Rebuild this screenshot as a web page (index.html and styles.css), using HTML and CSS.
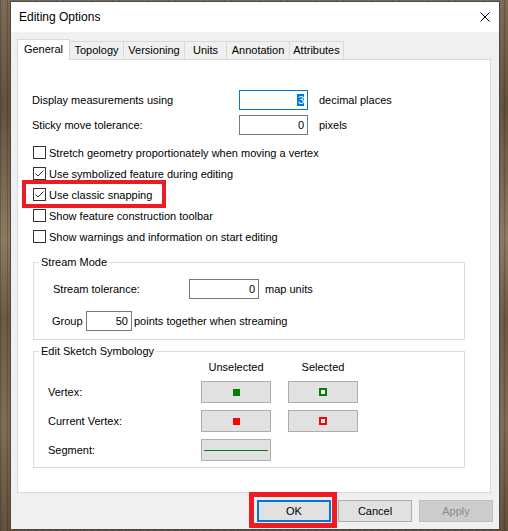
FILE: index.html
```html
<!DOCTYPE html>
<html>
<head>
<meta charset="utf-8">
<title>Editing Options</title>
<link rel="stylesheet" href="styles.css">
</head>
<body>
<div class="dialog">
  <div class="titlebar">
    <span class="title">Editing Options</span>
    <svg class="close" width="10" height="10" viewBox="0 0 10 10"><path d="M0.5 0.5 L9.5 9.5 M9.5 0.5 L0.5 9.5" stroke="#000" stroke-width="1" fill="none"/></svg>
  </div>
  <div class="client">
    <div class="tabs">
      <div class="tab active t-general">General</div>
      <div class="tab t-topology">Topology</div>
      <div class="tab t-versioning">Versioning</div>
      <div class="tab t-units">Units</div>
      <div class="tab t-annotation">Annotation</div>
      <div class="tab t-attributes">Attributes</div>
    </div>
    <div class="panel">
      <div class="row">
        <span class="label">Display measurements using</span>
        <span class="textbox focus"><span class="sel">3</span></span>
        <span class="unit">decimal places</span>
      </div>
      <div class="row">
        <span class="label">Sticky move tolerance:</span>
        <span class="textbox">0</span>
        <span class="unit">pixels</span>
      </div>
      <div class="checks">
        <div class="check"><span class="box"></span>Stretch geometry proportionately when moving a vertex</div>
        <div class="check"><span class="box"><svg width="11" height="11" viewBox="0 0 11 11"><path d="M1.5 5.5 L4 8 L9.5 2.5" stroke="#333" stroke-width="1" fill="none"/></svg></span>Use symbolized feature during editing</div>
        <div class="check"><span class="box"><svg width="11" height="11" viewBox="0 0 11 11"><path d="M1.5 5.5 L4 8 L9.5 2.5" stroke="#333" stroke-width="1" fill="none"/></svg></span>Use classic snapping</div>
        <div class="check"><span class="box"></span>Show feature construction toolbar</div>
        <div class="check"><span class="box"></span>Show warnings and information on start editing</div>
      </div>
      <div class="annot annot-snap"></div>

      <fieldset class="group stream">
        <legend>Stream Mode</legend>
        <div class="group-body">
          <div class="srow">
            <span class="slabel">Stream tolerance:</span>
            <span class="textbox tb-stream">0</span>
            <span class="sunit">map units</span>
          </div>
          <div class="srow srow-group">
            <span class="glabel">Group</span>
            <span class="textbox tb-group">50</span>
            <span class="gunit">points together when streaming</span>
          </div>
        </div>
      </fieldset>

      <fieldset class="group sketch">
        <legend>Edit Sketch Symbology</legend>
        <div class="sym-grid">
          <span></span>
          <span class="colhead">Unselected</span>
          <span class="colhead">Selected</span>

          <span class="symlabel">Vertex:</span>
          <span class="symbtn"><span class="sq sq-green"></span></span>
          <span class="symbtn"><span class="sq sq-green-open"></span></span>

          <span class="symlabel">Current Vertex:</span>
          <span class="symbtn"><span class="sq sq-red"></span></span>
          <span class="symbtn"><span class="sq sq-red-open"></span></span>

          <span class="symlabel">Segment:</span>
          <span class="symbtn"><span class="seg"></span></span>
          <span></span>
        </div>
      </fieldset>
    </div>
    <div class="buttons">
      <span class="btn-wrap">
        <span class="btn default">OK</span>
        <span class="annot annot-ok"></span>
      </span>
      <span class="btn">Cancel</span>
      <span class="btn disabled">Apply</span>
    </div>
  </div>
</div>
</body>
</html>
```

FILE: styles.css
```css
* { box-sizing: border-box; }
html, body { margin: 0; padding: 0; }
body {
  width: 508px;
  height: 531px;
  overflow: hidden;
  padding: 1px 0 0 10px;
  font-family: "Liberation Sans", Arial, sans-serif;
  font-size: 11px;
  color: #000;
  background-color: #6c5a46;
  background-image:
    repeating-linear-gradient(90deg, rgba(40,30,20,.25) 0 1px, transparent 1px 4px, rgba(160,140,110,.18) 4px 5px, transparent 5px 7px),
    linear-gradient(180deg, #7b6a55 0%, #5f4f3d 20%, #8a7a62 45%, #6a5843 60%, #7d6b55 80%, #5e4d3b 100%);
}

.dialog {
  width: 490px;
  height: 529px;
  border: 1px solid #4a4a4a;
  background: #f0f0f0;
  display: flex;
  flex-direction: column;
}

.titlebar {
  height: 30px;
  flex: none;
  background: #fff;
  display: flex;
  align-items: center;
  justify-content: space-between;
  padding: 0 9px 0 8px;
}
.title { font-size: 12px; }
.close { display: block; }

.client {
  flex: 1;
  display: flex;
  flex-direction: column;
  padding: 7px 0 0 6px;
}

.tabs {
  display: flex;
  align-items: flex-end;
  height: 20px;
  flex: none;
}
.tab {
  height: 18px;
  border: 1px solid #d9d9d9;
  border-bottom: none;
  background: #f0f0f0;
  margin-left: -1px;
  text-align: center;
  line-height: 17px;
}
.tab.active {
  height: 21px;
  background: #fff;
  margin-left: 0;
  margin-bottom: -1px;
  position: relative;
  z-index: 1;
  line-height: 18px;
}
.t-general { width: 53px; }
.t-topology { width: 55px; }
.t-versioning { width: 62px; }
.t-units { width: 43px; }
.t-annotation { width: 64px; }
.t-attributes { width: 55px; }

.panel {
  position: relative;
  width: 474px;
  height: 434px;
  flex: none;
  border: 1px solid #d9d9d9;
  background: #fff;
  padding: 30px 0 0 14px;
}

.row {
  display: flex;
  align-items: center;
  height: 20px;
}
.row + .row { margin-top: 5px; }
.label { width: 207px; }
.textbox {
  display: block;
  height: 20px;
  width: 69px;
  border: 1px solid #7a7a7a;
  background: #fff;
  text-align: right;
  padding-right: 3px;
  line-height: 18px;
}
.textbox.focus { border-color: #0078d7; }
.sel { background: #0078d7; color: #fff; padding: 0 0 0 1px; }
.unit { margin-left: 11px; }

.checks { margin-top: 7px; }
.check {
  display: flex;
  align-items: center;
  height: 21px;
  padding-left: 1px;
}
.box {
  width: 13px;
  height: 13px;
  border: 1px solid #333;
  background: #fff;
  margin-right: 3px;
  flex: none;
}
.box svg { display: block; }

.annot {
  position: absolute;
  border: 4px solid #ed1c24;
  pointer-events: none;
}
.annot-snap {
  left: 4px;
  top: 120px;
  width: 144px;
  height: 28px;
}

.group {
  width: 432px;
  margin: 3px 0 0 1px;
  border: 1px solid #dcdcdc;
  padding: 0 0 0 5px;
  min-width: 0;
}
.group legend {
  padding: 0 2px;
  line-height: 16px;
}
.stream { margin-top: 7px; padding-top: 9px; padding-bottom: 8px; }
.group-body { padding-left: 14px; }
.srow {
  display: flex;
  align-items: center;
  height: 20px;
}
.srow-group { margin-top: 12px; }
.slabel { width: 136px; }
.tb-stream { width: 70px; }
.sunit { margin-left: 6px; }
.glabel { width: 34px; margin-left: -1px; }
.tb-group { width: 46px; }
.gunit { margin-left: 2px; }

.sketch { margin-top: 3px; padding-bottom: 6px; }
.sym-grid {
  display: grid;
  grid-template-columns: 136px 70px 70px;
  grid-template-rows: 15px 22px 22px 22px;
  column-gap: 17px;
  row-gap: 7px;
  padding-left: 9px;
  align-items: center;
}
.colhead { text-align: center; }
.symbtn {
  height: 22px;
  border: 1px solid #adadad;
  background: #e1e1e1;
  display: flex;
  align-items: center;
  justify-content: center;
}
.sq { display: block; width: 8px; height: 8px; }
.sq-green { background: #008000; width: 7px; height: 7px; }
.sq-green-open { border: 2px solid #008000; background: #fff; }
.sq-red { background: #ff0000; width: 7px; height: 7px; }
.sq-red-open { border: 2px solid #ff0000; background: #fff; }
.seg { display: block; width: 64px; height: 1px; background: #008000; }

.buttons {
  display: flex;
  justify-content: flex-end;
  gap: 7px;
  margin-top: 7px;
  padding-right: 6px;
}
.btn-wrap { position: relative; display: block; }
.btn {
  display: block;
  width: 74px;
  height: 22px;
  border: 1px solid #adadad;
  background: #e1e1e1;
  text-align: center;
  line-height: 20px;
}
.btn.default { border: 2px solid #0078d7; line-height: 18px; }
.btn.disabled { background: #cccccc; border-color: #bfbfbf; color: #8a8a8a; }
.annot-ok {
  left: -8px;
  top: -8px;
  width: 88px;
  height: 36px;
  border-width: 5px;
}
```
